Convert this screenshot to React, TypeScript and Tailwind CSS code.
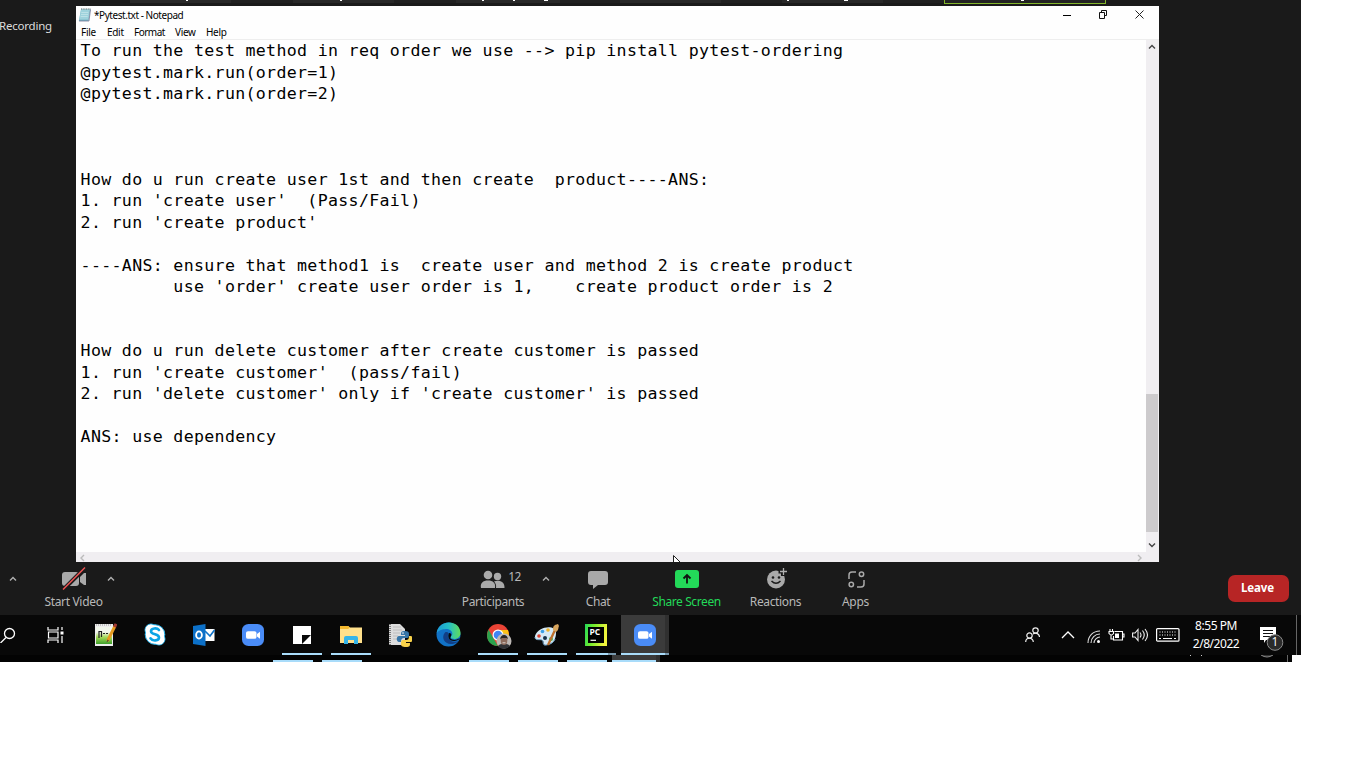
import React from "react";

const LINES = [
  "To run the test method in req order we use --> pip install pytest-ordering",
  "@pytest.mark.run(order=1)",
  "@pytest.mark.run(order=2)",
  "",
  "",
  "",
  "How do u run create user 1st and then create  product----ANS:",
  "1. run 'create user'  (Pass/Fail)",
  "2. run 'create product'",
  "",
  "----ANS: ensure that method1 is  create user and method 2 is create product",
  "         use 'order' create user order is 1,    create product order is 2",
  "",
  "",
  "How do u run delete customer after create customer is passed",
  "1. run 'create customer'  (pass/fail)",
  "2. run 'delete customer' only if 'create customer' is passed",
  "",
  "ANS: use dependency",
];

function Chevron({ className, d = "M1 5.500 L4 2.500 L7 5.500" }: { className?: string; d?: string }) {
  return (
    <svg width="8" height="8" viewBox="0 0 8 8" className={className} fill="none" stroke="currentColor" strokeWidth="1.4">
      <path d={d} />
    </svg>
  );
}

function TopStrip() {
  return (
    <div className="relative h-[6px] w-[1301px] shrink-0 bg-[#1a1a1a]">
      <div className="flex h-[3px] pl-[130px]">
        <div className="flex h-[3px] w-[976px] bg-[#202020]">
          <div className="w-[101px] bg-[#282828] pl-[56px]"><i className="block h-px w-[2px] bg-white" /></div>
          <div className="ml-[62px] w-[101px] bg-[#282828] pl-[47px]"><i className="block h-px w-[2px] bg-white" /></div>
          <div className="ml-[62px] flex w-[104px] gap-[29px] bg-[#282828] pl-[26px]">
            <i className="block h-px w-[2px] bg-white" />
            <i className="block h-px w-[2px] bg-white" />
            <i className="block h-px w-[4px] bg-white" />
          </div>
          <div className="ml-[60px] w-[101px] bg-[#282828]" />
          <div className="ml-[61px] flex w-[101px] gap-[55px] bg-[#282828] pl-[5px]">
            <i className="block h-px w-[2px] bg-white" />
            <i className="block h-px w-[4px] bg-white" />
          </div>
        </div>
      </div>
      <div className="absolute left-[944px] top-0 h-[4px] w-[162px] border border-t-0 border-[#82b52b] bg-[#222]">
        <i className="ml-[76px] block h-px w-[3px] bg-white" />
      </div>
    </div>
  );
}

function Notepad() {
  return (
    <div className="relative flex h-[556px] w-[1083px] flex-col bg-[#fefefe] text-black">
      <div className="flex h-[18px] shrink-0 items-center">
        <svg width="13" height="14" viewBox="0 0 13 14" className="ml-[2px]">
          <path d="M3 1.500h9.500L10.500 13H.8z" fill="#7fb9c8" />
          <path d="M3 1.500h9l-1.700 10H1.400z" fill="#9ed2dc" />
          <path d="M3.400 4.500h7M3 6.500h7M2.700 8.500h7" stroke="#c4e4ea" strokeWidth=".8" />
          <path d="M3 1h9.500" stroke="#566" strokeWidth="1" strokeDasharray="1 .7" />
          <path d="M12.500 1.500 11 13H1" stroke="#668" strokeWidth=".7" fill="none" />
        </svg>
        <span className="ml-[3px] whitespace-pre text-[10px] leading-none tracking-[-0.45px]">*Pytest.txt - Notepad</span>
        <div className="ml-auto mr-[15px] flex items-center gap-[28px] pb-[2px]">
          <svg width="8" height="9" viewBox="0 0 8 9"><path d="M0 5.500h8" stroke="#000" /></svg>
          <svg width="8" height="9" viewBox="0 0 8 9" fill="none" stroke="#111"><path d="M.5 2.500h5v6h-5zM2.500 2V.5h5v5H6" /></svg>
          <svg width="9" height="9" viewBox="0 0 9 9" fill="none" stroke="#222"><path d="M.5.5l8 8M8.500 .5l-8 8" /></svg>
        </div>
      </div>
      <div className="flex h-[16px] shrink-0 items-center border-b border-[#eee] pl-[5px] pt-[1px] text-[10px] leading-none tracking-[-0.3px]">
        <span className="w-[26px]">File</span>
        <span className="w-[27px]">Edit</span>
        <span className="w-[41px] tracking-[-0.5px]">Format</span>
        <span className="w-[31px]">View</span>
        <span>Help</span>
      </div>
      <div className="flex min-h-0 flex-1">
        <pre className="m-0 flex-1 overflow-hidden pl-[4.6px] pt-[0.2px] font-['DejaVu_Sans_Mono',monospace] text-[16.6px] leading-[21.43px] tracking-[0.317px]">
          {LINES.join("\n")}
        </pre>
        <div className="flex w-[13px] shrink-0 flex-col items-center bg-[#f0eef1] text-[#444]">
          <Chevron className="mr-[2px] mt-[3px] shrink-0" />
          <div className="mr-px mt-[343px] h-[138px] w-[12px] shrink-0 bg-[#cdcbcd]" />
          <Chevron className="mr-[2px] mt-[9px] shrink-0" d="M1 2.500 L4 5.500 L7 2.500" />
        </div>
      </div>
      <div className="flex h-[10px] shrink-0 items-end justify-between bg-[#f0eef1] pl-[3px] pr-[16px] text-[#bbb]">
        <Chevron d="M5 1 L2 4 L5 7" />
        <Chevron d="M3 1 L6 4 L3 7" />
      </div>
      <svg width="8" height="7" viewBox="0 0 8 7" className="absolute bottom-0 left-[597px]">
        <path d="M.5 8V.5L8 8" fill="#fff" stroke="#222" />
      </svg>
    </div>
  );
}

function Tool({ label, width, ls, green, children }: { label: string; width: string; ls: string; green?: boolean; children: React.ReactNode }) {
  return (
    <div className={"flex shrink-0 flex-col items-center " + width + (green ? " text-[#23d959]" : " text-[#b8b8b8]")}>
      <div className="flex h-[33px] items-center">{children}</div>
      <span className={"whitespace-nowrap text-[12px] leading-[13px] " + ls}>{label}</span>
    </div>
  );
}

function ZoomBar() {
  return (
    <div className="flex h-[53px] shrink-0 items-start">
      <Chevron className="ml-[9px] mt-[13px] shrink-0 text-[#b0b0b0]" />
      <div className="ml-[20px] flex">
        <Tool label="Start Video" width="w-[73px]" ls="tracking-[-0.33px]">
          <svg width="26" height="24" viewBox="0 0 26 24" className="mb-[1px]">
            <rect x="1" y="6" width="17" height="14" rx="3" fill="#a9a9a9" />
            <path d="M19 11l4-4h2v12h-2l-4-3z" fill="#a9a9a9" />
            <path d="M2 24 24 2" stroke="#1a1a1a" strokeWidth="4" />
            <path d="M2 23.500 24 1.500" stroke="#ef5353" strokeWidth="1.500" />
          </svg>
        </Tool>
      </div>
      <Chevron className="ml-[-3px] mt-[13px] shrink-0 text-[#b0b0b0]" />
      <div className="ml-[338px] flex">
        <Tool label="Participants" width="w-[80px]" ls="tracking-[-0.36px]">
          <svg width="25" height="20" viewBox="0 0 25 20" fill="#a9a9a9" className="ml-[15px] mt-[2px]">
            <circle cx="8" cy="5" r="4.300" /><circle cx="17.500" cy="6.500" r="3.700" />
            <path d="M1 18c-1-5 2-7.500 7-7.500s8 2.500 7 7.500zM16 18c.5-3-.5-5-2-6.500 5-2 11 0 10.500 6.500z" />
          </svg>
          <span className="mb-[4px] ml-[3px] text-[12px] leading-none tracking-[-0.6px]">12</span>
        </Tool>
      </div>
      <Chevron className="ml-[9px] mt-[13px] shrink-0 text-[#b0b0b0]" />
      <div className="ml-[23px] flex">
        <Tool label="Chat" width="w-[50px]" ls="tracking-[-0.35px]">
          <svg width="20" height="18" viewBox="0 0 20 18" className="mt-[2px]"><path d="M3 0h14a3 3 0 0 1 3 3v8a3 3 0 0 1-3 3h-7l-5 4v-4H3a3 3 0 0 1-3-3V3a3 3 0 0 1 3-3" fill="#a9a9a9" /></svg>
        </Tool>
        <Tool label="Share Screen" width="w-[127px]" ls="tracking-[-0.4px]" green>
          <svg width="24" height="18" viewBox="0 0 24 18"><rect width="24" height="18" rx="3" fill="#23d959" /><path d="M12 13.500V5M8.500 8.500 12 5l3.500 3.500" stroke="#111" strokeWidth="1.800" fill="none" /></svg>
        </Tool>
        <Tool label="Reactions" width="w-[51px]" ls="tracking-[-0.36px]">
          <svg width="22" height="22" viewBox="0 0 22 22" className="ml-[3px] mt-[-2px]">
            <circle cx="10" cy="12.500" r="9" fill="#a9a9a9" />
            <path d="M17 0v9M12.500 4.500h9" stroke="#1a1a1a" strokeWidth="4" />
            <path d="M17.500 1v7M14 4.500h7" stroke="#b0b0b0" strokeWidth="1.300" />
            <circle cx="7" cy="10.500" r="1.300" fill="#1a1a1a" /><circle cx="13" cy="10.500" r="1.300" fill="#1a1a1a" />
            <path d="M5.500 14q4.500 4.500 9 0" fill="none" stroke="#1a1a1a" strokeWidth="1.500" />
          </svg>
        </Tool>
        <Tool label="Apps" width="w-[109px]" ls="tracking-[-0.3px]">
          <svg width="17" height="17" viewBox="0 0 17 17" fill="none" stroke="#a9a9a9" strokeWidth="1.500" className="ml-[1px] mt-[2px]">
            <path d="M1 8V4q0-3 3-3h4M9 16h4q3 0 3-3V9" /><circle cx="13.500" cy="3.300" r="2.200" /><circle cx="3.300" cy="13.500" r="2.200" />
          </svg>
        </Tool>
      </div>
      <div className="ml-auto mr-[12px] mt-[13px] flex h-[27px] w-[61px] items-center justify-center rounded-[7px] bg-[#b72525] pb-[1px] pr-[2px] text-[11.500px] font-bold tracking-[-0.1px] text-white">Leave</div>
    </div>
  );
}

function ZoomLogo() {
  return (
    <svg width="22" height="22" viewBox="0 0 22 23" preserveAspectRatio="none"><rect width="22" height="23" rx="6.500" fill="#4a8cf7" /><rect x="4" y="7.500" width="10.500" height="8" rx="2" fill="#fff" /><path d="M15 10.500l3-2.500v7.500l-3-2.500z" fill="#fff" /></svg>
  );
}

const APPS: { icon: React.ReactNode; open?: boolean; active?: boolean; stacked?: boolean }[] = [
  { icon: <svg width="16" height="16" viewBox="0 0 16 16" fill="none" stroke="#fff" strokeWidth="1.300"><circle cx="9.500" cy="6.500" r="5" /><path d="M6 10.500 .5 16" /></svg> },
  { icon: <svg width="17" height="16" viewBox="0 0 17 16" fill="none" stroke="#fff" strokeWidth="1.200" className="mr-[3px]"><path d="M1 0v3h10V0M1 16v-3h10v3M1.500 5h9.500v6H1.500zM15 0v3M15 9v7" /><path d="M13.500 4.500h3v3h-3z" fill="#fff" stroke="none" /></svg> },
  {
    icon: (
      <svg width="23" height="24" viewBox="0 0 23 24">
        <defs><linearGradient id="npp" x2="0" y2="1"><stop offset=".3" stopColor="#f2f7ec" /><stop offset=".6" stopColor="#a4da57" /><stop offset="1" stopColor="#3d9e2b" /></linearGradient></defs>
        <path d="M1 1h18v22H1z" fill="#eee" /><path d="M2 4h16v17H2z" fill="url(#npp)" />
        <path d="M2 2h16" stroke="#999" strokeDasharray="1 1" /><path d="M5 8v7M5 8.500h2.500V14M9 10.500h2M12 10.500h2" stroke="#222" strokeWidth="1.200" fill="none" />
        <path d="M21 3 13.500 18" stroke="#e69b20" strokeWidth="3" /><path d="M22 .8 20.500 4" stroke="#a33a32" strokeWidth="3" /><path d="M13.500 16.500l-1 3 2.500-2z" fill="#543" />
      </svg>
    ),
  },
  {
    icon: (
      <svg width="22" height="23" viewBox="0 0 22 23">
        <circle cx="7" cy="7" r="6" fill="#fff" stroke="#20aee8" /><circle cx="15" cy="16" r="6" fill="#fff" stroke="#20aee8" /><circle cx="11" cy="11.500" r="9.800" fill="#fff" stroke="#20aee8" />
        <circle cx="7" cy="7" r="5.500" fill="#fff" /><circle cx="15" cy="16" r="5.500" fill="#fff" />
        <path d="M15 7C13 4.500 7 5 7 8.200c0 4 8 2.300 8 6.300 0 3.500-6.500 4-8.500.8" fill="none" stroke="#0ba4e5" strokeWidth="2.600" strokeLinecap="round" />
      </svg>
    ),
  },
  {
    icon: (
      <svg width="23" height="22" viewBox="0 0 23 22">
        <rect x="12" y="5" width="10.500" height="12" fill="#fff" /><path d="M13 7l5 5 4.500-6" fill="none" stroke="#0f72c8" strokeWidth="1.600" />
        <path d="M1 2 13.500 0v22L1 20z" fill="#0c70c8" /><ellipse cx="7" cy="11" rx="2.900" ry="3.600" fill="none" stroke="#fff" strokeWidth="1.800" />
      </svg>
    ),
  },
  { icon: <ZoomLogo /> },
  { open: true, icon: <svg width="18" height="18" viewBox="0 0 18 18"><path d="M0 0h18v18H0z" fill="#fff" /><path d="M9 18V9h9z" fill="#080808" /></svg> },
  {
    open: true,
    icon: (
      <svg width="22" height="18" viewBox="0 0 22 18">
        <path d="M0 0h8l2 1.500h12V17H0z" fill="#ffe08b" /><path d="M0 0h8l2 1.500L8 3H0z" fill="#f5b92e" /><path d="M4 18v-6q0-2 2-2h10q2 0 2 2v6h-4v-4H8v4z" fill="#35b4e8" />
      </svg>
    ),
  },
  {
    icon: (
      <svg width="24" height="24" viewBox="0 0 24 24">
        <path d="M1 1h11l5 5v16H1z" fill="#ddd" /><path d="M2 1v21" stroke="#555" strokeWidth="1.500" strokeDasharray="1 1" /><path d="M5 4h8M5 7h9M5 10h7M5 13h5M5 16h4" stroke="#aaa" strokeWidth=".6" />
        <path d="M17 8c-4 0-4 1-4 4h4v1h-6c-3 0-3 6 0 6h2c0-3 1-4 3-4h3c2 0 2-2 2-4s-1-3-4-3" fill="#3776a8" />
        <path d="M18 24c4 0 4-1 4-4h-4v-1h5c2 0 2-6 0-6h-2c0 3-1 4-3 4h-3c-2 0-2 2-2 4s1 3 5 3" fill="#f8d24a" /><circle cx="15" cy="10" r=".8" fill="#fff" />
      </svg>
    ),
  },
  {
    icon: (
      <svg width="25" height="25" viewBox="0 0 25 25">
        <defs><linearGradient id="edg"><stop stopColor="#1c9bd8" /><stop offset=".5" stopColor="#24bfc7" /><stop offset="1" stopColor="#61dc59" /></linearGradient></defs>
        <circle cx="12.500" cy="12.500" r="12" fill="#1172c7" />
        <path d="M.7 11.500C2-3 24-3 24.500 11c0 5-5 7-8.500 5.500-2-.8-1.300-2 0-3.500 1.500-3-2-6-6-6-4 .2-8 1.500-9.300 4.500" fill="url(#edg)" />
        <path d="M9 10.500C5 15 8 22 15 22c4 0 7-2 7-3-4 2-8.500 0-8.500-2-2-1-2-4-1-5.500 0-1-2-2-3.500-1" fill="#123f86" />
        <path d="M13 11c2 0 3 1.500 2 3-1 2-1 2.500 1 3.500 3 1 5 0 8-1.200-3 4-10.500 3.500-11.500-.8-.5-2 0-3.500.5-4.500" fill="#080808" />
      </svg>
    ),
  },
  {
    open: true,
    icon: (
      <svg width="26" height="26" viewBox="0 0 26 26" className="ml-[2px] mt-[2px]">
        <circle cx="12" cy="12" r="11" fill="#ea4335" /><path d="M2.500 6.500 9 18l3 5C2 23-1 14 2.500 6.500" fill="#2ba24c" /><path d="M12 7h10c3 8-2 16-10 16l5-9z" fill="#fbc116" />
        <circle cx="12" cy="12" r="5.500" fill="#fff" /><circle cx="12" cy="12" r="4.300" fill="#4285f4" />
        <circle cx="18" cy="18" r="7.500" fill="#bdb8b5" /><path d="M12 23c2-3 10-3 12 0-2 3-10 4-12 0" fill="#303236" /><ellipse cx="18" cy="17.500" rx="3.300" ry="4.500" fill="#8c6b5c" /><path d="M14.300 16.500c-.5-6 8-6 7.500 0l-1-1.500h-5z" fill="#252323" /><path d="M16.500 19.800h3" stroke="#eee" strokeWidth=".8" />
      </svg>
    ),
  },
  {
    open: true,
    icon: (
      <svg width="26" height="24" viewBox="0 0 26 24">
        <path d="M1 13C4 3 22 1 22 10c0 5-2 11-10 12-4 .4-1-4-4-5-3-.7-8 1-7-4" fill="#d5e9f5" /><path d="M1 14c0 4 5 2 7 3s0 6 4 5c5-.6 8-3 9-6" fill="none" stroke="#78acd0" strokeWidth="1" />
        <circle cx="5" cy="13" r="1.800" fill="#df4333" /><circle cx="8.500" cy="8.500" r="1.800" fill="#3b9ee5" /><circle cx="14" cy="7" r="1.800" fill="#efb326" /><circle cx="17" cy="16" r="2" fill="#3bb75b" /><circle cx="11" cy="15" r="2" fill="#16324a" />
        <path d="M21 7 14 22" stroke="#bd6f2c" strokeWidth="2.300" /><path d="M19 7c0-4 1-5 5-6l1 2c-1 2 0 4-3 6z" fill="#d7a55e" />
      </svg>
    ),
  },
  {
    open: true,
    stacked: true,
    icon: (
      <svg width="22" height="22" viewBox="0 0 22 22">
        <defs><linearGradient id="pyc" x2="1" y2=".2"><stop stopColor="#21d75a" /><stop offset=".4" stopColor="#73ec2c" /><stop offset="1" stopColor="#f1f43d" /></linearGradient></defs>
        <path d="M0 0h22v22H0z" fill="url(#pyc)" /><path d="M3 3h16v16H3z" fill="#000" /><path d="M5.500 16.300h5.500" stroke="#fff" strokeWidth="1.200" />
        <text x="4.500" y="11.200" fontSize="8.500" fontWeight="700" fill="#fff" fontFamily="Open Sans, sans-serif">PC</text>
      </svg>
    ),
  },
  { open: true, active: true, icon: <ZoomLogo /> },
];

function Taskbar() {
  return (
    <div className="flex h-[40px] w-[1301px] shrink-0 overflow-hidden bg-[#080808] text-white">
      <div className="ml-[-17px] flex">
        {APPS.map((a, i) => (
          <div key={i} className={"relative flex h-[40px] shrink-0 items-center justify-center pb-px " + (a.active ? "ml-px w-[48px] border-r-[4px] border-[#303030] bg-[#3b3b3b] pl-[3px]" : "w-[49px]")}>
            {a.icon}
            {a.open && (
              <div className={"absolute bottom-0 flex h-[2px] bg-[#a9dcfa] " + (a.active ? "left-0 right-[-4px]" : "left-[5px] w-[40px]")}>
                {(a.active || a.stacked) && <i className={"ml-auto h-[2px] bg-[#7898ad] " + (a.active ? "w-[4px]" : "w-[8px]")} />}
              </div>
            )}
          </div>
        ))}
      </div>
      <div className="ml-auto flex items-center">
        <svg width="15" height="16" viewBox="0 0 15 16" fill="none" stroke="#eee" strokeWidth="1.200" className="mb-px"><circle cx="10.500" cy="3.500" r="2.700" /><circle cx="4.500" cy="8.500" r="2.700" /><path d="M.7 15c0-5 7.600-5 7.600 0M8 7c3-2 6.500 0 6.500 3" /></svg>
        <svg width="14" height="8" viewBox="0 0 14 8" fill="none" stroke="#fff" strokeWidth="1.300" className="ml-[21px]"><path d="M1 7l6-6 6 6" /></svg>
        <svg width="13" height="13" viewBox="0 0 13 13" fill="none" stroke="#ddd" strokeWidth="1.100" className="ml-[12px] mt-[2px]"><path d="M1 13C1 6 6 1 13 1M4 13c0-5 4-9 9-9M7 13c0-3 3-6 6-6" /><circle cx="11.500" cy="11.500" r="1.500" fill="#fff" stroke="none" /></svg>
        <svg width="17" height="13" viewBox="0 0 17 13" fill="none" stroke="#fff" strokeWidth="1.100" className="ml-[8px]"><path d="M6.500 2.500h8v8.500H5.500V7M15 5h1v3h-1M2 0v2M4.500 0v2M1 2.500h4.500v2q-2 3-4.500 0zM3 6v4h2" /><path d="M7 4.500h4v4.500H7z" fill="#fff" stroke="none" /></svg>
        <svg width="17" height="14" viewBox="0 0 17 14" fill="none" stroke="#eee" strokeWidth="1.100" className="ml-[7px]"><path d="M.6 5H3l3-3.500v11L3 9H.6zM8 4.500q2 2.500 0 5M10.500 2.500q3.500 4.500 0 9M13 1q5 6 0 12" /></svg>
        <svg width="24" height="14" viewBox="0 0 24 14" fill="none" stroke="#fff" className="mb-px ml-[7px]"><rect x=".6" y=".6" width="22.400" height="12.600" rx="1" strokeWidth="1.200" /><path d="M3.500 4h17M3.500 7h17" strokeDasharray="1 1.500" strokeWidth="1.200" /><path d="M3 10.500h2M7 10.500h9M18 10.500h2" /></svg>
        <div className="ml-[5px] flex w-[62px] flex-col items-center pb-px text-[12px] leading-[18px] tracking-[-0.450px]">
          <span>8:55 PM</span><span>2/8/2022</span>
        </div>
        <div className="ml-[12px] mr-[9px] h-[40px] w-[28px]">
          <svg width="26" height="27" viewBox="0 0 26 27" className="mt-[11px]">
            <path d="M1 1h16v13H7l-2 3v-3H1z" fill="#fff" /><path d="M4 4.500h10M4 7.500h10M4 10.500h7" stroke="#111" />
            <circle cx="16" cy="16.500" r="7.800" fill="#2b2b2b" stroke="#8b8b8b" />
            <text x="16" y="20.300" textAnchor="middle" fontSize="12" fill="#fff" fontFamily="Open Sans, sans-serif">1</text>
          </svg>
        </div>
        <div className="mr-[4px] h-[40px] w-px bg-[#666]" />
      </div>
    </div>
  );
}

function TaskbarEdge() {
  return (
    <div className="h-[7px] w-[1292px] shrink-0 overflow-hidden bg-[#030303]">
      <div className="ml-[-26px] flex items-end">
        {APPS.map((a, i) => (
          <div key={i} className={"flex h-[7px] shrink-0 items-end " + (a.active ? "ml-px w-[48px] border-r-[4px] border-[#303030] bg-[#3b3b3b]" : "w-[49px] pl-[5px]")}>
            {a.open && <div className={"h-[2px] bg-[#a9dcfa] " + (a.active ? "w-full" : "w-[40px]")} />}
          </div>
        ))}
        <div className="ml-[530px] flex h-[7px] gap-[10px]"><i className="h-px w-px bg-[#ccc]" /><i className="h-px w-px bg-[#ccc]" /></div>
        <svg width="16" height="7" viewBox="0 0 16 7" className="ml-[57px]"><path d="M2 0q6 4 12 0" fill="#333" stroke="#888" /></svg>
        <div className="ml-[12px] h-[7px] w-px bg-[#666]" />
      </div>
    </div>
  );
}

export default function App() {
  return (
    <div className="flex h-[768px] w-[1366px] flex-col overflow-hidden bg-white font-['Noto_Sans','Open_Sans',sans-serif]">
      <div className="flex h-[615px] w-[1301px] shrink-0 flex-col bg-[#1a1a1a]">
        <TopStrip />
        <div className="flex">
          <div className="ml-[-1px] w-[77px] shrink-0 pt-[13px] text-[11.500px] leading-[14px] tracking-[-0.22px] text-[#ddd]">Recording</div>
          <Notepad />
        </div>
        <ZoomBar />
      </div>
      <Taskbar />
      <TaskbarEdge />
    </div>
  );
}
